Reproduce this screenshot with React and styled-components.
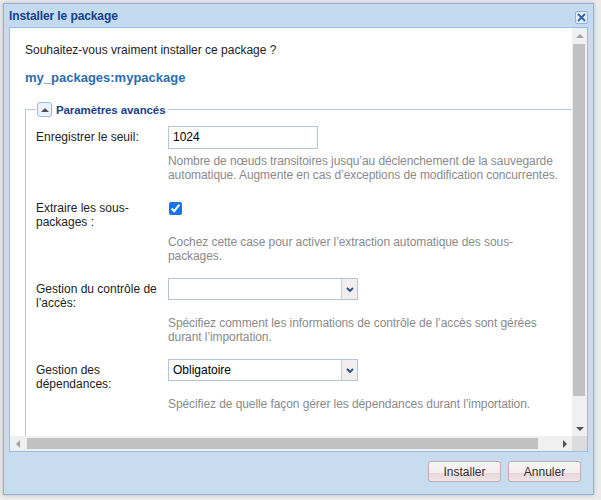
import React from "react";
import styled, { createGlobalStyle, css } from "styled-components";

const GlobalStyle = createGlobalStyle`
  html, body {
    margin: 0;
    padding: 0;
  }

  body {
    background: #ebebeb;
    font-family: "Liberation Sans", Arial, sans-serif;
    font-size: 12px;
    color: #222;
  }
`;

const Page = styled.div`
    width: 601px;
    height: 500px;
    padding: 3px 0 0 3px;
    box-sizing: border-box;
    overflow: hidden;
`;

const Dialog = styled.div`
    width: 591px;
    height: 492px;
    box-sizing: border-box;
    border: 1px solid #8eb2dc;
    background: #c7dcee;
    display: flex;
    flex-direction: column;
    box-shadow: 0 0 4px rgba(0, 0, 0, 0.22);
`;

const Header = styled.div`
    height: 23px;
    flex: none;
    display: flex;
    align-items: center;
    justify-content: space-between;
    padding: 0 5px;
    background: #c3daf0;
`;

const Title = styled.span`
    font-weight: bold;
    font-size: 12px;
    letter-spacing: -0.1px;
    color: #15428b;
`;

const CloseButton = styled.button`
    width: 13px;
    height: 13px;
    padding: 0;
    margin-top: 4px;
    border: 1px solid #8db2e3;
    border-radius: 2px;
    background: #e4eefa;
    display: flex;
    align-items: center;
    justify-content: center;
`;

const Panel = styled.div`
    margin: 0 5px;
    height: 425px;
    flex: none;
    box-sizing: border-box;
    border: 1px solid #99bbe8;
    background: #fff;
    display: grid;
    grid-template-columns: 1fr 15px;
    grid-template-rows: 1fr 15px;
`;

const Viewport = styled.div`
    overflow: hidden;
    padding: 15px 0 0 15px;
`;

const Intro = styled.p`
    margin: 0;
    line-height: 14px;
    color: #222;
`;

const PackageName = styled.p`
    margin: 14px 0 0;
    line-height: 14px;
    font-size: 13px;
    font-weight: bold;
    color: #2a6db0;
`;

const Fieldset = styled.fieldset`
    margin: 17px 0 0;
    width: 575px;
    min-width: 0;
    box-sizing: border-box;
    border: 1px solid #b5c8e2;
    padding: 9px 0 40px 10px;
`;

const Legend = styled.legend`
    padding: 0 3px 0 1px;
    height: 15px;
    display: flex;
    align-items: center;
    gap: 4px;
    font-weight: bold;
    font-size: 11.5px;
    letter-spacing: -0.1px;
    color: #15428b;
`;

const ToggleButton = styled.span`
    width: 15px;
    height: 15px;
    box-sizing: border-box;
    border: 1px solid #99bbe8;
    border-radius: 3px;
    background: #eaf2fb;
    display: flex;
    align-items: center;
    justify-content: center;
`;

const Field = styled.div`
    display: grid;
    grid-template-columns: 132px auto;
    row-gap: 6px;
    margin-bottom: 15px;
`;

const Label = styled.label`
    width: 126px;
    padding-top: 4px;
    line-height: 14px;
    color: #222;
`;

const Control = styled.div`
    height: 22px;
    display: flex;
    align-items: center;
`;

const Help = styled.div`
    grid-column: 2;
    line-height: 14px;
    letter-spacing: -0.08px;
    color: #8a8a8a;
    white-space: nowrap;
`;

const TextInput = styled.input`
    width: 150px;
    height: 23px;
    box-sizing: border-box;
    border: 1px solid #b5c5d8;
    padding: 0 4px;
    font: inherit;
    color: #000;
    background: #fff;
    outline: none;
`;

const Checkbox = styled.input`
    width: 13px;
    height: 13px;
    margin: 0 0 0 1px;
    accent-color: #1a73e8;
`;

const Select = styled.div`
    width: 190px;
    height: 22px;
    box-sizing: border-box;
    border: 1px solid #b5c5d8;
    display: flex;
    background: #fff;
`;

const SelectValue = styled.span`
    flex: 1;
    padding-left: 4px;
    line-height: 20px;
    color: #000;
`;

const SelectTrigger = styled.span`
    width: 15px;
    border-left: 1px solid #c6cddb;
    background: #f3eeee;
    display: flex;
    align-items: center;
    justify-content: center;
`;

const ScrollBar = styled.div`
    background: #f0f0f0;
    display: flex;
    flex-direction: ${(p) => (p.$vertical ? "column" : "row")};
`;

const ScrollArrow = styled.div`
    flex: none;
    width: 15px;
    height: 15px;
    display: flex;
    align-items: center;
    justify-content: center;
`;

const Track = styled.div`
    flex: 1;
    display: flex;
    flex-direction: ${(p) => (p.$vertical ? "column" : "row")};
`;

const Thumb = styled.div`
    background: #c1c1c1;
    ${(p) =>
        p.$vertical
            ? css`
                  margin: 1px 2px 0 1px;
                  height: ${p.$size}px;
              `
            : css`
                  margin: 2px 0 2px 2px;
                  width: ${p.$size}px;
              `}
`;

const Triangle = styled.span`
    width: 0;
    height: 0;
    ${(p) => {
        const c = p.$active ? "#505050" : "#a3a3a3";
        switch (p.$dir) {
            case "up":
                return css`
                    border-left: 4px solid transparent;
                    border-right: 4px solid transparent;
                    border-bottom: 4px solid ${c};
                `;
            case "down":
                return css`
                    border-left: 4px solid transparent;
                    border-right: 4px solid transparent;
                    border-top: 4px solid ${c};
                `;
            case "left":
                return css`
                    border-top: 4px solid transparent;
                    border-bottom: 4px solid transparent;
                    border-right: 4px solid ${c};
                `;
            default:
                return css`
                    border-top: 4px solid transparent;
                    border-bottom: 4px solid transparent;
                    border-left: 4px solid ${c};
                `;
        }
    }}
`;

const Corner = styled.div`
    background: #dcdcdc;
`;

const Footer = styled.div`
    flex: 1;
    display: flex;
    justify-content: flex-end;
    gap: 7px;
    padding: 9px 12px 0 0;
`;

const Button = styled.button`
    width: 73px;
    height: 21px;
    padding: 0;
    border: 1px solid #c4abb3;
    border-radius: 3px;
    background: linear-gradient(
        to bottom,
        #f8f5f5 0%,
        #f2eeee 58%,
        #e7d7db 60%,
        #efe5e8 100%
    );
    font: inherit;
    color: #333;
`;

const Chevron = () => (
    <svg width="8" height="5" viewBox="0 0 8 5">
        <path d="M1 1 L4 4 L7 1" fill="none" stroke="#1f4f8f" strokeWidth="1.8" />
    </svg>
);

const DropDown = ({ value }) => (
    <Select>
        <SelectValue>{value}</SelectValue>
        <SelectTrigger>
            <Chevron />
        </SelectTrigger>
    </Select>
);

const App = () => {
    return (
        <Page>
            <GlobalStyle />
            <Dialog>
                <Header>
                    <Title>Installer le package</Title>
                    <CloseButton aria-label="Fermer">
                        <svg width="9" height="9" viewBox="0 0 9 9">
                            <path
                                d="M1 1 L8 8 M8 1 L1 8"
                                stroke="#2f63a8"
                                strokeWidth="1.8"
                            />
                        </svg>
                    </CloseButton>
                </Header>

                <Panel>
                    <Viewport>
                        <Intro>Souhaitez-vous vraiment installer ce package ?</Intro>
                        <PackageName>my_packages:mypackage</PackageName>

                        <Fieldset>
                            <Legend>
                                <ToggleButton>
                                    <Triangle $dir="up" $active />
                                </ToggleButton>
                                Paramètres avancés
                            </Legend>

                            <Field>
                                <Label>Enregistrer le seuil:</Label>
                                <Control>
                                    <TextInput defaultValue="1024" />
                                </Control>
                                <Help>
                                    Nombre de nœuds transitoires jusqu’au déclenchement de la sauvegarde
                                    <br />
                                    automatique. Augmente en cas d’exceptions de modification concurrentes.
                                </Help>
                            </Field>

                            <Field>
                                <Label>Extraire les sous-packages :</Label>
                                <Control>
                                    <Checkbox type="checkbox" defaultChecked />
                                </Control>
                                <Help>
                                    Cochez cette case pour activer l’extraction automatique des sous-
                                    <br />
                                    packages.
                                </Help>
                            </Field>

                            <Field>
                                <Label>Gestion du contrôle de l’accès:</Label>
                                <Control>
                                    <DropDown value="" />
                                </Control>
                                <Help>
                                    Spécifiez comment les informations de contrôle de l’accès sont gérées
                                    <br />
                                    durant l’importation.
                                </Help>
                            </Field>

                            <Field>
                                <Label>Gestion des dépendances:</Label>
                                <Control>
                                    <DropDown value="Obligatoire" />
                                </Control>
                                <Help>
                                    Spécifiez de quelle façon gérer les dépendances durant l’importation.
                                </Help>
                            </Field>
                        </Fieldset>
                    </Viewport>

                    <ScrollBar $vertical>
                        <ScrollArrow>
                            <Triangle $dir="up" />
                        </ScrollArrow>
                        <Track $vertical>
                            <Thumb $vertical $size={352} />
                        </Track>
                        <ScrollArrow>
                            <Triangle $dir="down" $active />
                        </ScrollArrow>
                    </ScrollBar>

                    <ScrollBar>
                        <ScrollArrow>
                            <Triangle $dir="left" />
                        </ScrollArrow>
                        <Track>
                            <Thumb $size={511} />
                        </Track>
                        <ScrollArrow>
                            <Triangle $dir="right" $active />
                        </ScrollArrow>
                    </ScrollBar>

                    <Corner />
                </Panel>

                <Footer>
                    <Button>Installer</Button>
                    <Button>Annuler</Button>
                </Footer>
            </Dialog>
        </Page>
    );
};

export default App;
